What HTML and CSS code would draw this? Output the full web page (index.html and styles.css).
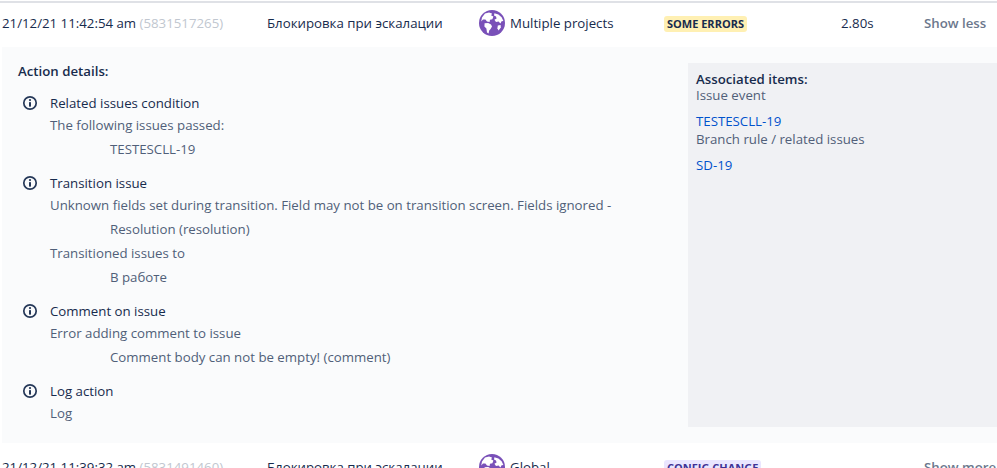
FILE: index.html
```html
<!DOCTYPE html>
<html>
<head>
    <meta charset="UTF-8">
    <meta name="viewport" content="width=device-width, initial-scale=1.0">
    <title>Audit log</title>
    <link rel="stylesheet" href="styles.css">
</head>
<body>
    <svg class="defs" width="0" height="0">
        <symbol id="globe" viewBox="0 0 26 26">
            <circle cx="13" cy="13" r="13" fill="#7950b8"/>
            <path fill="#fff" d="M6 3.5 10 2.6 13 3.4 12.2 5.4 14.4 6.6 13.4 9.2 11 9.8 10.6 12 8 11.4 6.4 9.4 4 9.6 2.2 11.6 3 7.6Z"/>
            <path fill="#fff" d="M5.6 13.2 9.2 13 12 14.6 13 16.4 11.6 19 10.2 20.6 9.6 23.4 8 22.6 7.4 18.6 5.4 16.4Z"/>
            <path fill="#fff" d="M15.4 3.2 19.4 4.4 22.6 7.2 24.4 11 22.6 11.2 21.4 13.6 19.6 11.4 17 12 15.4 9.8 17.6 8.6 17 6.4 15 5.4Z"/>
            <path fill="#fff" d="M18.8 15.4 21.6 15 21.8 17.4 19.6 20.4 18.4 18.4Z"/>
        </symbol>
        <symbol id="info" viewBox="0 0 16 16">
            <circle cx="8" cy="8" r="6.2" fill="none" stroke="#253858" stroke-width="1.7"/>
            <circle cx="8" cy="5.1" r="1.1" fill="#253858"/>
            <rect x="7" y="7.1" width="2" height="4.6" rx=".6" fill="#253858"/>
        </symbol>
    </svg>

    <div class="log">
        <div class="row">
            <div class="when">21/12/21 11:42:54 am <span class="log-id">(5831517265)</span></div>
            <div class="rule">Блокировка при эскалации</div>
            <div class="scope"><svg class="globe"><use href="#globe"/></svg>Multiple projects</div>
            <div class="status"><span class="badge badge-errors">SOME ERRORS</span></div>
            <div class="time">2.80s</div>
            <div class="toggle">Show less</div>
        </div>

        <div class="details">
            <div class="actions">
                <div class="heading">Action details:</div>

                <div class="action">
                    <svg class="info"><use href="#info"/></svg>
                    <div class="action-body">
                        <div class="action-title">Related issues condition</div>
                        <div class="line">The following issues passed:</div>
                        <div class="line sub">TESTESCLL-19</div>
                    </div>
                </div>

                <div class="action">
                    <svg class="info"><use href="#info"/></svg>
                    <div class="action-body">
                        <div class="action-title">Transition issue</div>
                        <div class="line">Unknown fields set during transition. Field may not be on transition screen. Fields ignored -</div>
                        <div class="line sub">Resolution (resolution)</div>
                        <div class="line">Transitioned issues to</div>
                        <div class="line sub">В работе</div>
                    </div>
                </div>

                <div class="action">
                    <svg class="info"><use href="#info"/></svg>
                    <div class="action-body">
                        <div class="action-title">Comment on issue</div>
                        <div class="line">Error adding comment to issue</div>
                        <div class="line sub">Comment body can not be empty! (comment)</div>
                    </div>
                </div>

                <div class="action">
                    <svg class="info"><use href="#info"/></svg>
                    <div class="action-body">
                        <div class="action-title">Log action</div>
                        <div class="line">Log</div>
                    </div>
                </div>
            </div>

            <div class="associated">
                <div class="heading-small">Associated items:</div>
                <div class="assoc-type">Issue event</div>
                <a class="assoc-link" href="#">TESTESCLL-19</a>
                <div class="assoc-type">Branch rule / related issues</div>
                <a class="assoc-link" href="#">SD-19</a>
            </div>
        </div>

        <div class="row row-next">
            <div class="when">21/12/21 11:39:32 am <span class="log-id">(5831491460)</span></div>
            <div class="rule">Блокировка при эскалации</div>
            <div class="scope"><svg class="globe"><use href="#globe"/></svg>Global</div>
            <div class="status"><span class="badge badge-config">CONFIG CHANGE</span></div>
            <div class="time"></div>
            <div class="toggle">Show more</div>
        </div>
    </div>
</body>
</html>
```

FILE: styles.css
```css
html, body{
    height: 100%;
    overflow: hidden;
}
body{
    margin: 0;
    background-color: #fff;
    font-family: "Open Sans", "Noto Sans", sans-serif;
    font-size: 13.25px;
    color: #172b4d;
}
.defs{
    display: block;
    height: 0;
}
.log{
    margin-top: 1px;
    border-top: 2px solid #dfe1e6;
}
.row{
    display: grid;
    grid-template-columns: 267px 212px 185px 177px 83px 73px;
    align-items: center;
    height: 40px;
    padding-bottom: 4px;
    white-space: nowrap;
}
.row-next{
    margin-top: 4px;
}
.when{
    padding-left: 2px;
}
.log-id{
    color: #c1c7d0;
}
.scope{
    display: flex;
    align-items: center;
    gap: 5px;
}
.globe{
    width: 26px;
    height: 26px;
}
.badge{
    display: inline-block;
    padding: 0 3px;
    border-radius: 3px;
    font-size: 11px;
    font-weight: 700;
    line-height: 16px;
    color: #172b4d;
}
.badge-errors{
    background-color: #fff0b3;
}
.badge-config{
    background-color: #eae6ff;
    color: #403294;
}
.toggle{
    color: #6b778c;
    font-weight: 600;
}
.details{
    display: flex;
    justify-content: space-between;
    margin-left: 2px;
    padding: 16px 0;
    background-color: #fafbfc;
    height: 364px;
}
.actions{
    padding-left: 16px;
}
.heading{
    font-weight: 600;
    line-height: 16px;
    margin-bottom: 14px;
}
.action{
    display: flex;
    gap: 12px;
    margin-bottom: 14px;
    padding-left: 4px;
}
.info{
    width: 16px;
    height: 16px;
    flex: none;
    margin-top: 2px;
}
.action-title{
    line-height: 20px;
}
.line{
    color: #505f79;
    line-height: 20px;
    margin-top: 4px;
}
.action-title + .line{
    margin-top: 2px;
}
.sub{
    padding-left: 60px;
}
.associated{
    width: 301px;
    padding: 8px 0 0 8px;
    background-color: #f0f1f4;
    line-height: 16px;
}
.heading-small{
    font-weight: 600;
}
.assoc-type{
    color: #505f79;
}
.assoc-link + .assoc-type{
    margin-top: 2px;
}
.assoc-link{
    display: block;
    color: #0052cc;
    text-decoration: none;
    margin-top: 10px;
}
```
